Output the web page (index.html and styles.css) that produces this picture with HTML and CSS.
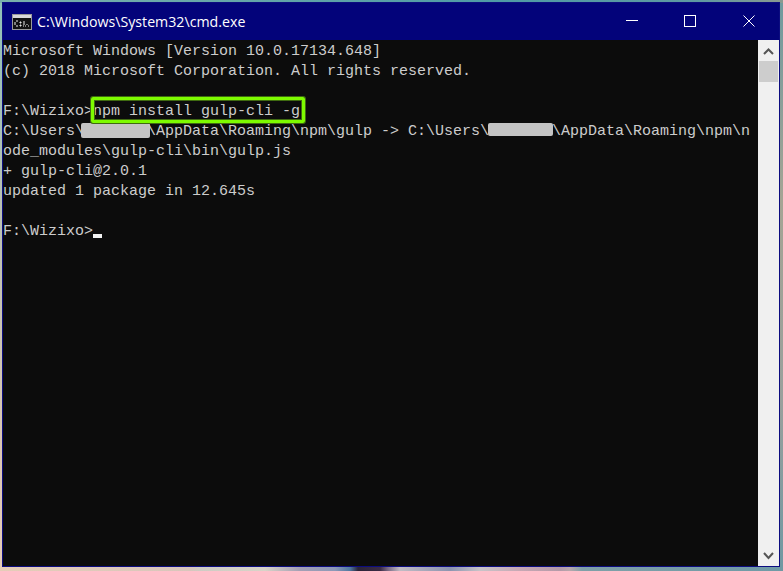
FILE: index.html
```html
<!DOCTYPE html>
<html lang="en">
<head>
<meta charset="utf-8">
<title>cmd.exe</title>
<link rel="stylesheet" href="styles.css">
</head>
<body>
<div class="desktop">
  <div class="window">
    <header class="titlebar">
      <svg class="app-icon" width="20" height="16" viewBox="0 0 20 16">
        <rect x="0" y="0" width="20" height="16" fill="#9a9a9a"/>
        <rect x="1" y="1" width="18" height="3" fill="#d8d8d8"/>
        <rect x="1" y="4" width="18" height="11" fill="#111"/>
        <path d="M4 7h2M3 8v3M4 12h2M8 8h1v1H8zM8 11h1v1H8zM11 12h1M12 7v4M13 12h1M16 12h1M15 11v-1" stroke="#eee" stroke-width="1" fill="none"/>
      </svg>
      <span class="title">C:\Windows\System32\cmd.exe</span>
      <div class="controls">
        <span class="ctl"><svg width="12" height="12" viewBox="0 0 12 12"><path d="M0 5.5h12" stroke="#fff" stroke-width="1"/></svg></span>
        <span class="ctl"><svg width="12" height="12" viewBox="0 0 12 12"><rect x=".5" y=".5" width="11" height="11" fill="none" stroke="#fff"/></svg></span>
        <span class="ctl ctl-close"><svg width="12" height="12" viewBox="0 0 12 12"><path d="M.5.5l11 11M11.5.5l-11 11" stroke="#fff" stroke-width="1"/></svg></span>
      </div>
    </header>
    <div class="body">
      <main class="console">
<pre class="line">Microsoft Windows [Version 10.0.17134.648]</pre>
<pre class="line">(c) 2018 Microsoft Corporation. All rights reserved.</pre>
<pre class="line"> </pre>
<pre class="line">F:\Wizixo&gt;<span class="hl">npm install gulp-cli -g</span></pre>
<pre class="line">C:\Users\<span class="blur b1"></span>\AppData\Roaming\npm\gulp -&gt; C:\Users\<span class="blur b2"></span>\AppData\Roaming\npm\n</pre>
<pre class="line">ode_modules\gulp-cli\bin\gulp.js</pre>
<pre class="line">+ gulp-cli@2.0.1</pre>
<pre class="line">updated 1 package in 12.645s</pre>
<pre class="line"> </pre>
<pre class="line">F:\Wizixo&gt;<span class="cursor"></span></pre>
      </main>
      <aside class="scrollbar">
        <svg class="arrow" width="21" height="21" viewBox="0 0 21 21"><path d="M6 14l4.5-4.5 4.5 4.5" fill="none" stroke="#555" stroke-width="2"/></svg>
        <div class="thumb"></div>
        <div class="track"></div>
        <svg class="arrow" width="21" height="21" viewBox="0 0 21 21"><path d="M6 8l4.5 5 4.5-5" fill="none" stroke="#555" stroke-width="2"/></svg>
      </aside>
    </div>
  </div>
</div>
</body>
</html>
```

FILE: styles.css
```css
html, body { margin: 0; padding: 0; }
.desktop {
  width: 783px; height: 571px; box-sizing: border-box; padding: 2px 3px 4px 2px; overflow: hidden;
  background-color: #8aa;
  background-repeat: no-repeat;
  background-image:
    linear-gradient(90deg, #79b0ac 0, #4f9ba6 500px, #5f9aa2 700px, #8a9a90 783px),
    linear-gradient(180deg, #8fc0b8 0, #b9c2b4 200px, #dcc8b4 450px, #e6cdb8 571px),
    linear-gradient(180deg, #6f9a9e 0, #a5a494 200px, #9aa09c 400px, #6f98a2 571px),
    linear-gradient(90deg, #e6cdb8 0, #d9c6bc 190px, #cfccc4 200px, #d8d4c8 265px, #a49fb4 300px, #8d99b8 335px, #4f78a0 350px, #2a2438 358px, #3a2a44 380px, #7a6a84 388px, #c2bcc4 400px, #8c94b0 450px, #c8c4c8 480px, #c8a8b4 520px, #b49aa8 560px, #b8a8ac 570px, #7fa0a8 582px, #6f9aa6 783px);
  background-size: 100% 3px, 2px 100%, 3px 100%, 100% 4px;
  background-position: top left, top left, top right, bottom left;
}
.window {
  height: 100%; box-sizing: border-box; border: 1px solid #0c0c80; display: flex; flex-direction: column; background: #0c0c0c;
}
.titlebar {
  flex: 0 0 37px; background: #03037a; display: flex; align-items: center; color: #fff;
}
.app-icon { margin-left: 9px; margin-right: 5px; }
.title { font: 14.2px "Open Sans", "Liberation Sans", sans-serif; flex: 1; }
.controls { display: flex; height: 100%; margin-right: 1px; }
.ctl { width: 58px; display: flex; align-items: center; justify-content: center; }
.ctl svg { margin-bottom: 1px; }
.ctl-close { width: 59px; padding-left: 1px; box-sizing: border-box; }
.body { flex: 1; display: flex; min-height: 0; }
.console { flex: 1; padding-top: 2px; color: #cccccc; font: 15px/20px "Liberation Mono", monospace; }
.line { margin: 0; height: 20px; font: inherit; white-space: pre; }
.hl { display: inline-block; height: 20px; position: relative; }
.hl::after {
  content: ""; position: absolute; left: -2px; right: -5px; top: -5px; bottom: -1px;
  border: 3px solid #7dfb00; border-radius: 2px; box-shadow: 0 0 0 1px #3f6a10, inset 0 0 0 1px #3f6a10;
}
.blur { background: #c4c4c4; border-radius: 2px; display: inline-block; vertical-align: -3px; }
.b1 { width: 69px; height: 15px; margin: 0 -3px; }
.b2 { width: 65px; height: 13px; margin: 0 -1px; vertical-align: -1px; }
.cursor { display: inline-block; width: 9px; height: 4px; background: #f2f2f2; vertical-align: -3px; }
.scrollbar { flex: 0 0 21px; background: #f0f0f0; display: flex; flex-direction: column; }
.arrow { display: block; flex: none; }
.thumb { height: 21px; margin: 0 1px; background: #cdcdcd; }
.track { flex: 1; }
```
